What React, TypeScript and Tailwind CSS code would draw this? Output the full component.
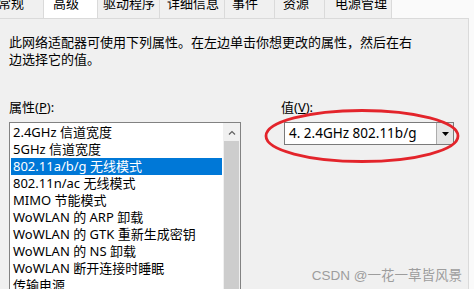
import React from "react";

const tabs = [
  { label: "常规", w: "w-[44px]", pl: "pl-0", off: true },
  { label: "高级", w: "w-[54px]", pl: "pl-[9px]", active: true },
  { label: "驱动程序", w: "w-[62px]", pl: "pl-[5px]" },
  { label: "详细信息", w: "w-[65px]", pl: "pl-[7px]" },
  { label: "事件", w: "w-[50px]", pl: "pl-[7px]" },
  { label: "资源", w: "w-[50px]", pl: "pl-[8px]" },
  { label: "电源管理", w: "w-[67px]", pl: "pl-[10px]" },
];

const props = [
  "2.4GHz 信道宽度",
  "5GHz 信道宽度",
  "802.11a/b/g 无线模式",
  "802.11n/ac 无线模式",
  "MIMO 节能模式",
  "WoWLAN 的 ARP 卸载",
  "WoWLAN 的 GTK 重新生成密钥",
  "WoWLAN 的 NS 卸载",
  "WoWLAN 断开连接时睡眠",
  "传输电源",
];

const font = "font-['Noto_Sans','Noto_Sans_CJK_SC',sans-serif]";

export default function App() {
  return (
    <div
      className={`relative flex h-[289px] w-[474px] flex-col overflow-hidden bg-[#fafafa] text-[13px] text-black ${font}`}
    >
      {/* tab strip */}
      <div className="flex h-[18px] shrink-0">
        {tabs.map((t) => (
          <div
            key={t.label}
            className={`flex h-full items-start border-r border-[#dadada] ${t.w} ${t.pl} ${
              t.active ? "bg-white" : "bg-[#f0f0f0]"
            }`}
          >
            <span
              className={`-mt-[3px] leading-[13px] ${t.off ? "-ml-[2px]" : ""}`}
            >
              {t.label}
            </span>
          </div>
        ))}
      </div>

      {/* property page */}
      <div className="flex w-[469px] flex-1 flex-col border-t border-r border-[#dadada] bg-[#f0f0f0] pl-[9px] pt-[15px]">
        <p className="w-[410px] leading-[17px]">
          此网络适配器可使用下列属性。在左边单击你想更改的属性，然后在右边选择它的值。
        </p>

        <div className="mt-[30px] flex flex-1 gap-[40px]">
          {/* left column */}
          <div className="flex w-[232px] flex-col">
            <div className="leading-[18px]">
              属性(<span className="underline">P</span>):
            </div>
            <div className="mt-[6px] flex flex-1 border border-[#828282] bg-white">
              <ul className="flex-1 pt-[0.5px]">
                {props.map((p, i) => (
                  <li
                    key={p}
                    className={`ml-[1px] mr-[1px] flex h-[17px] items-center pl-[2px] leading-[17px] ${
                      i === 2 ? "bg-[#0078d7] text-white" : ""
                    }`}
                  >
                    {p}
                  </li>
                ))}
              </ul>
              <div className="flex w-[17px] flex-col bg-[#f0f0f0]">
                <div className="flex h-[18px] items-center justify-center">
                  <svg width="8" height="5" viewBox="0 0 8 5">
                    <path d="M1 4.5 L4 1.5 L7 4.5" fill="none" stroke="#606060" strokeWidth="1.2" />
                  </svg>
                </div>
                <div className="mx-[1px] flex-1 bg-[#cdcdcd]" />
              </div>
            </div>
          </div>

          {/* right column */}
          <div className="flex flex-col">
            <div className="leading-[18px]">
              值(<span className="underline">V</span>):
            </div>
            <div className="ml-[3px] mt-[6px] flex h-[23px] w-[170px] border border-[#7a7a7a] bg-white">
              <div className="flex flex-1 items-center pl-[4px] text-[13.5px]">4. 2.4GHz 802.11b/g</div>
              <div className="flex w-[17px] items-center justify-center border-l border-[#adadad] bg-[#e5e5e5]">
                <svg width="7" height="4" viewBox="0 0 7 4">
                  <path d="M0 0 H7 L3.5 4 Z" fill="#000" />
                </svg>
              </div>
            </div>
          </div>
        </div>
      </div>

      {/* red annotation */}
      <svg
        className="pointer-events-none absolute left-[263px] top-[108px]"
        width="198"
        height="56"
        viewBox="0 0 198 56"
      >
        <ellipse cx="99" cy="28" rx="96" ry="25.5" fill="none" stroke="#e3242b" strokeWidth="2.8" />
      </svg>

      {/* watermark */}
      <div className="pointer-events-none absolute right-[12px] top-[267px] text-[13.5px] leading-[18px] text-[#9d9d9d] font-['Liberation_Sans','Noto_Sans_CJK_SC',sans-serif]">
        CSDN @一花一草皆风景
      </div>
    </div>
  );
}
